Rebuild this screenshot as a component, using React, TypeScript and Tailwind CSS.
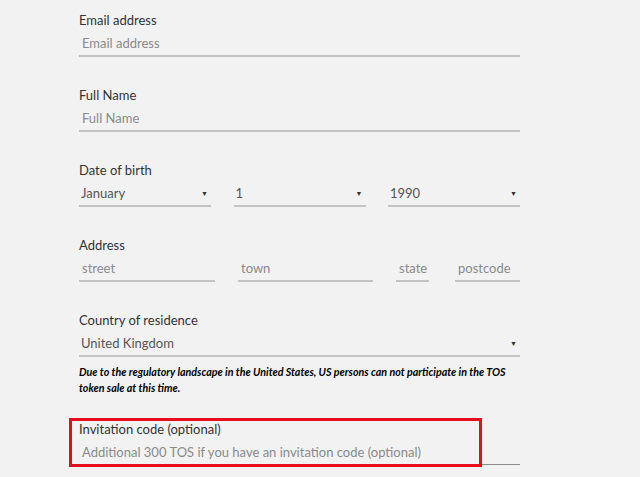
import React from "react";

const font = { fontFamily: "Lato, 'Noto Sans', sans-serif" };

function Field({ label, placeholder }: { label: string; placeholder: string }) {
  return (
    <div className="mb-[29px]">
      <div className="h-[18px] text-[13px] leading-[18px] text-[#333]">{label}</div>
      <div className="flex h-[28px] items-center border-b-2 border-[#c4c4c4] pl-[3px] pt-[3px] text-[13px] text-[#8a8a8a]">
        {placeholder}
      </div>
    </div>
  );
}

function Select({ value, className }: { value: string; className?: string }) {
  return (
    <div
      className={`flex h-[28px] items-center justify-between border-b-2 border-[#c4c4c4] pl-[2px] pr-[3px] pt-[3px] text-[13px] text-[#555] ${className ?? ""}`}
    >
      <span>{value}</span>
      <span className="text-[7px] text-[#333]">▼</span>
    </div>
  );
}

function Input({ placeholder, className }: { placeholder: string; className: string }) {
  return (
    <div
      className={`flex h-[28px] items-center border-b-2 border-[#c4c4c4] pl-[3px] pt-[3px] text-[13px] text-[#8a8a8a] ${className}`}
    >
      {placeholder}
    </div>
  );
}

export default function App() {
  return (
    <div className="h-[477px] w-[640px] overflow-hidden bg-[#f2f2f2]" style={font}>
      <div className="ml-[79px] w-[441px] pt-[11px]">
        <Field label="Email address" placeholder="Email address" />
        <Field label="Full Name" placeholder="Full Name" />

        <div className="mb-[29px]">
          <div className="h-[18px] text-[13px] leading-[18px] text-[#333]">Date of birth</div>
          <div className="flex justify-between">
            <Select value="January" className="w-[132px]" />
            <Select value="1" className="w-[132px]" />
            <Select value="1990" className="w-[132px]" />
          </div>
        </div>

        <div className="mb-[29px]">
          <div className="h-[18px] text-[13px] leading-[18px] text-[#333]">Address</div>
          <div className="flex">
            <Input placeholder="street" className="w-[136px]" />
            <Input placeholder="town" className="ml-[23px] w-[135px]" />
            <Input placeholder="state" className="ml-[23px] w-[33px]" />
            <Input placeholder="postcode" className="ml-[26px] w-[65px]" />
          </div>
        </div>

        <div>
          <div className="h-[18px] text-[13px] leading-[18px] text-[#333]">Country of residence</div>
          <Select value="United Kingdom" className="w-full" />
        </div>

        <p className="mt-[7px] text-[10.7px] font-bold italic leading-[16px] text-black">
          Due to the regulatory landscape in the United States, US persons can not participate in the TOS
          token sale at this time.
        </p>

        <div className="relative mt-[24px]">
          <div className="h-[18px] text-[13px] leading-[18px] text-[#333]">Invitation code (optional)</div>
          <div className="flex h-[27px] items-center border-b border-[#8a8a8a] pl-[3px] pt-[3px] text-[13px] text-[#8a8a8a]">
            Additional 300 TOS if you have an invitation code (optional)
          </div>
          <div className="pointer-events-none absolute left-[-10px] top-[-2px] h-[49px] w-[413px] border-[3px] border-[#e60e1e]" />
        </div>
      </div>
    </div>
  );
}
